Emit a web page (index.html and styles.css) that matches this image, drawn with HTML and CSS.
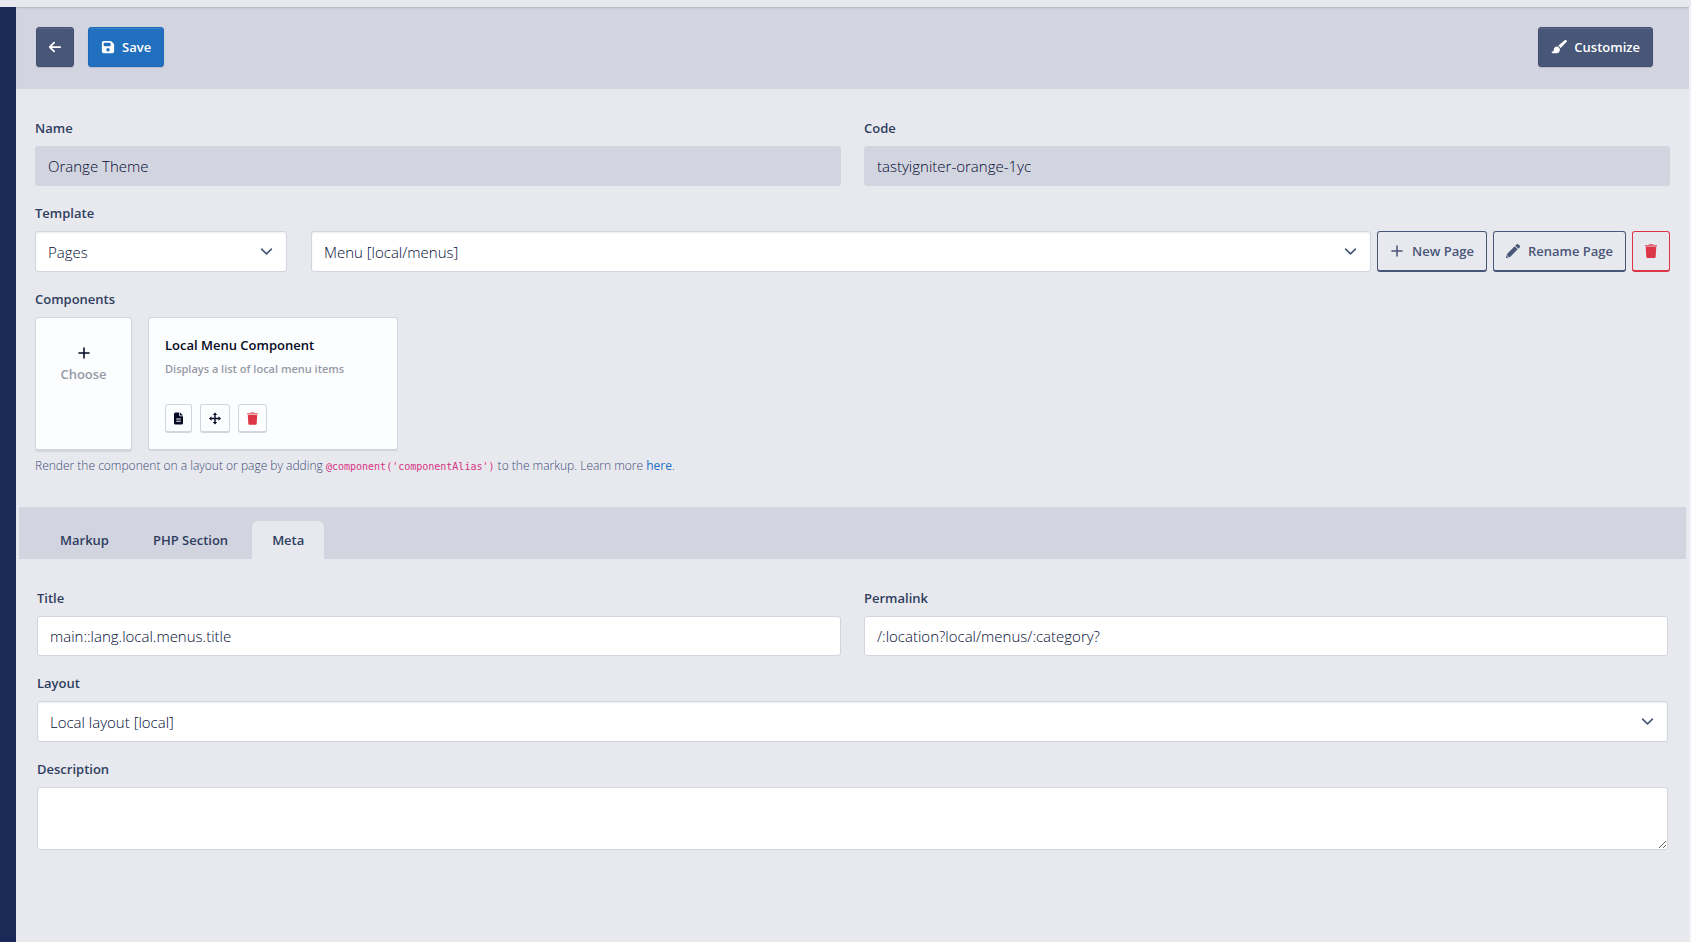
FILE: index.html
```html
<!DOCTYPE html>
<html lang="en">
<head>
    <title>Edit Theme</title>
    <meta charset="UTF-8">
    <meta name="viewport" content="width=device-width, initial-scale=1.0">
    <link rel="stylesheet" href="styles.css">
</head>
<body>
    <svg class="sprite" aria-hidden="true">
        <symbol id="icon-trash" viewBox="0 0 448 512"><path opacity=".7" d="M135 18L128 32H32a32 32 0 0 0 0 64h384a32 32 0 0 0 0-64h-96l-7-14A32 32 0 0 0 284 0H164a32 32 0 0 0-29 18z"/><path d="M416 112H32l21 355a48 48 0 0 0 48 45h246a48 48 0 0 0 48-45z"/></symbol>
        <symbol id="icon-plus" viewBox="0 0 448 512"><path d="M252 72a28 28 0 0 0-56 0v156H40a28 28 0 0 0 0 56h156v156a28 28 0 0 0 56 0V284h156a28 28 0 0 0 0-56H252z"/></symbol>
        <symbol id="icon-chevron" viewBox="0 0 16 16"><path d="M2 5l6 6 6-6" fill="none" stroke="currentColor" stroke-width="2" stroke-linecap="round" stroke-linejoin="round"/></symbol>
    </svg>

    <div class="page">
        <aside class="sidebar"></aside>
        <main class="content">
            <div class="toolbar">
                <button type="button" class="btn btn-dark btn-icon" aria-label="Back">
                    <svg class="icon" viewBox="0 0 448 512"><path d="M9 233a32 32 0 0 0 0 46l160 160a32 32 0 0 0 46-46L109 288h307a32 32 0 0 0 0-64H109L215 119a32 32 0 0 0-46-46z"/></svg>
                </button>
                <button type="submit" class="btn btn-primary" form="theme-form">
                    <svg class="icon" viewBox="0 0 448 512"><path fill-rule="evenodd" d="M64 32a64 64 0 0 0-64 64v320a64 64 0 0 0 64 64h320a64 64 0 0 0 64-64V173c0-17-7-33-19-45l-77-77c-12-12-28-19-45-19zM64 128a32 32 0 0 1 32-32h192a32 32 0 0 1 32 32v64a32 32 0 0 1-32 32H96a32 32 0 0 1-32-32zM224 288a64 64 0 1 1 0 128 64 64 0 0 1 0-128z"/></svg>
                    Save
                </button>
                <button type="button" class="btn btn-dark btn-customize">
                    <svg class="icon icon-wide" viewBox="0 0 576 512"><path d="M339 301L560 75a44 44 0 0 0-64-62L259 214c45 15 70 45 80 87zM320 364c0-68-45-120-112-124-63 4-112 56-112 120v12c1 22-14 44-37 44H48c-18 0-32 14-32 32s14 32 32 32h152c67 0 120-52 120-116z"/></svg>
                    Customize
                </button>
            </div>

            <form id="theme-form">
                <div class="section">
                    <div class="row">
                        <div class="field">
                            <label for="name">Name</label>
                            <input type="text" id="name" class="control" value="Orange Theme" disabled>
                        </div>
                        <div class="field">
                            <label for="code">Code</label>
                            <input type="text" id="code" class="control" value="tastyigniter-orange-1yc" disabled>
                        </div>
                    </div>

                    <div class="field">
                        <label for="template">Template</label>
                        <div class="template">
                            <div class="select template-type">
                                <select id="template" class="control"><option>Pages</option></select>
                                <svg class="chevron"><use href="#icon-chevron"/></svg>
                            </div>
                            <div class="template-file">
                                <div class="select">
                                    <select class="control" aria-label="Template file"><option>Menu [local/menus]</option></select>
                                    <svg class="chevron"><use href="#icon-chevron"/></svg>
                                </div>
                                <button type="button" class="btn btn-outline">
                                    <svg class="icon"><use href="#icon-plus"/></svg>
                                    New Page
                                </button>
                                <button type="button" class="btn btn-outline">
                                    <svg class="icon" viewBox="0 0 512 512"><path d="M498 58l-44-44a48 48 0 0 0-68 0l-46 46 112 112 46-46a48 48 0 0 0 0-68z"/><path fill-rule="evenodd" d="M316 84L46 354 1 484a22 22 0 0 0 27 27l130-45 270-270zM60 410l42 42-50 16-8-8z"/></svg>
                                    Rename Page
                                </button>
                                <button type="button" class="btn btn-outline btn-danger btn-icon" aria-label="Delete page">
                                    <svg class="icon"><use href="#icon-trash"/></svg>
                                </button>
                            </div>
                        </div>
                    </div>

                    <div class="field">
                        <h2 class="label">Components</h2>
                        <div class="components">
                            <button type="button" class="card card-choose">
                                <svg class="icon"><use href="#icon-plus"/></svg>
                                Choose
                            </button>
                            <div class="card card-component">
                                <h3>Local Menu Component</h3>
                                <p>Displays a list of local menu items</p>
                                <div class="card-actions">
                                    <button type="button" class="btn-small" aria-label="Edit partial">
                                        <svg class="icon icon-narrow" viewBox="0 0 384 512"><path fill-rule="evenodd" d="M64 0a64 64 0 0 0-64 64v384a64 64 0 0 0 64 64h256a64 64 0 0 0 64-64V160H256a32 32 0 0 1-32-32V0zM256 0v128h128zM96 256h192v40H96zM96 352h192v40H96z"/></svg>
                                    </button>
                                    <button type="button" class="btn-small" aria-label="Move">
                                        <svg class="icon icon-wide" viewBox="0 0 512 512"><path d="M256 0l-94 106h64v120H106v-64L0 256l106 94v-64h120v120h-64l94 106 94-106h-64V286h120v64l106-94-106-94v64H286V106h64z"/></svg>
                                    </button>
                                    <button type="button" class="btn-small text-danger" aria-label="Remove">
                                        <svg class="icon"><use href="#icon-trash"/></svg>
                                    </button>
                                </div>
                            </div>
                        </div>
                        <p class="help">Render the component on a layout or page by adding <code>@component('componentAlias')</code> to the markup. Learn more <a href="#">here</a>.</p>
                    </div>
                </div>

                <nav class="tabs">
                    <a href="#markup">Markup</a>
                    <a href="#php">PHP Section</a>
                    <a href="#meta" class="active">Meta</a>
                </nav>

                <div class="section section-meta" id="meta">
                    <div class="row">
                        <div class="field">
                            <label for="title">Title</label>
                            <input type="text" id="title" class="control" value="main::lang.local.menus.title">
                        </div>
                        <div class="field">
                            <label for="permalink">Permalink</label>
                            <input type="text" id="permalink" class="control" value="/:location?local/menus/:category?">
                        </div>
                    </div>
                    <div class="field">
                        <label for="layout">Layout</label>
                        <div class="select">
                            <select id="layout" class="control"><option>Local layout [local]</option></select>
                            <svg class="chevron"><use href="#icon-chevron"/></svg>
                        </div>
                    </div>
                    <div class="field">
                        <label for="description">Description</label>
                        <textarea id="description" class="control"></textarea>
                    </div>
                </div>
            </form>
        </main>
    </div>
</body>
</html>
```

FILE: styles.css
```css
* {
    box-sizing: border-box;
}
body {
    margin: 0;
    padding-top: 7px;
    background-color: #e8e9ee;
    color: #2f3e5f;
    font-family: "Open Sans", "Noto Sans", sans-serif;
    font-size: 14px;
    line-height: 20px;
}
h2, h3, p {
    margin: 0;
}
button, input, select, textarea {
    font-family: inherit;
}
.sprite {
    display: none;
}
.icon {
    width: 14px;
    height: 14px;
    fill: currentColor;
}
.icon-wide {
    width: 16px;
}
.page {
    display: flex;
    min-height: calc(100vh - 7px);
}
.sidebar {
    flex: none;
    width: 16px;
    background-color: #1a2956;
}
.content {
    flex: 1;
    min-width: 0;
    border-right: 2px solid #f0f1f4;
}

/* Toolbar */
.toolbar {
    display: flex;
    gap: 14px;
    padding: 20px 36px 22px 20px;
    background-color: #d2d4df;
    box-shadow: inset 0 2px 2px -1px #b4b6c2;
}
.btn {
    display: flex;
    align-items: center;
    justify-content: center;
    gap: 7px;
    height: 40px;
    padding: 0 12px;
    border: 1px solid transparent;
    border-radius: 3px;
    color: #fff;
    font-size: 13px;
    font-weight: 600;
    white-space: nowrap;
    cursor: pointer;
}
.btn-icon {
    width: 38px;
    padding: 0;
}
.btn-dark {
    background-color: #485678;
    border-color: #435074;
    box-shadow: inset 0 1px 0 #5d6987, 0 1px 1px #b9bccb;
}
.btn-primary {
    background-color: #216fbf;
    border-color: #1f69b8;
    box-shadow: inset 0 1px 0 #3b81c8, 0 1px 1px #b9bccb;
}
.btn-customize {
    margin-left: auto;
}
.btn-outline {
    height: 41px;
    border-color: #485678;
    border-bottom-width: 2px;
    background-color: transparent;
    color: #485678;
}
.template-file .btn-outline {
    gap: 8px;
}
.btn-danger {
    border-color: #dc3545;
    color: #dc3545;
}
.text-danger {
    color: #dc3545;
}

/* Form */
.section {
    display: flex;
    flex-direction: column;
    gap: 17px;
    padding: 29px 19px 30px;
}
.section-meta {
    padding: 29px 21px;
}
.row {
    display: grid;
    grid-template-columns: 1fr 1fr;
    gap: 23px;
}
label, .label {
    display: block;
    margin-bottom: 8px;
    font-size: 13px;
    font-weight: 600;
    line-height: 20px;
}
.control {
    display: block;
    width: 100%;
    height: 40px;
    padding: 0 12px;
    border: 1px solid #d2d4df;
    border-radius: 3px;
    background-color: #fff;
    color: #020b33;
    font-size: 15px;
    font-weight: 300;
}
.control:disabled {
    background-color: #d2d4df;
}
textarea.control {
    height: 63px;
    padding: 8px 12px;
    resize: vertical;
}
.select {
    position: relative;
}
select.control {
    height: 41px;
    appearance: none;
    box-shadow: inset 0 1px 2px #eceef2;
}
.chevron {
    position: absolute;
    top: 14px;
    right: 14px;
    width: 13px;
    height: 13px;
    color: #485678;
    pointer-events: none;
}
.template {
    display: flex;
    gap: 24px;
}
.template-type {
    flex: none;
    width: 252px;
}
.template-file {
    display: flex;
    flex: 1;
    gap: 6px;
}
.template-file .select {
    flex: 1;
}

/* Components */
.components {
    display: flex;
    gap: 16px;
    margin-bottom: 5px;
}
.card {
    height: 134px;
    border: 1px solid #d2d4df;
    border-bottom-width: 2px;
    border-radius: 3px;
    background-color: #fcfdff;
}
.card-choose {
    display: flex;
    flex-direction: column;
    align-items: center;
    gap: 5px;
    width: 97px;
    padding: 28px 0 0;
    box-shadow: 0 1px 1px #d2d4df;
    color: #969aa5;
    font-size: 13px;
    font-weight: 600;
    cursor: pointer;
}
.card-choose .icon {
    color: #050a24;
}
.card-component {
    width: 250px;
    padding: 17px 16px;
}
.card-component h3 {
    margin-bottom: 4px;
    color: #050a24;
    font-size: 13px;
    font-weight: 600;
    line-height: 20px;
}
.card-component p {
    color: #969aa5;
    font-size: 11px;
    font-weight: 600;
    line-height: 20px;
}
.card-actions {
    display: flex;
    gap: 8px;
    margin-top: 25px;
}
.btn-small {
    display: flex;
    align-items: center;
    justify-content: center;
    height: 29px;
    padding: 0 8px;
    border: 1px solid #d2d4df;
    border-bottom-width: 2px;
    border-radius: 3px;
    background-color: #fcfdff;
    color: #050a24;
    cursor: pointer;
}
.btn-small.text-danger {
    color: #dc3545;
}
.btn-small .icon {
    width: 11px;
    height: 13px;
}
.btn-small .icon-narrow {
    width: 9px;
}
.btn-small .icon-wide {
    width: 12px;
}
.help {
    color: #3c4c78;
    font-size: 12px;
    font-weight: 300;
    line-height: 20px;
}
.help code {
    color: #d63384;
    font-family: "DejaVu Sans Mono", monospace;
    font-size: 10px;
}
.help a {
    color: #216fbf;
    font-weight: 400;
    text-decoration: none;
}

/* Tabs */
.tabs {
    display: flex;
    gap: 4px;
    margin: 0 3px;
    padding: 14px 21px 0;
    background-color: #d2d4df;
}
.tabs a {
    padding: 9px 20px;
    border-radius: 6px 6px 0 0;
    color: #2f3e5f;
    font-size: 13px;
    font-weight: 600;
    text-decoration: none;
}
.tabs .active {
    background-color: #e8e9ee;
}
```
